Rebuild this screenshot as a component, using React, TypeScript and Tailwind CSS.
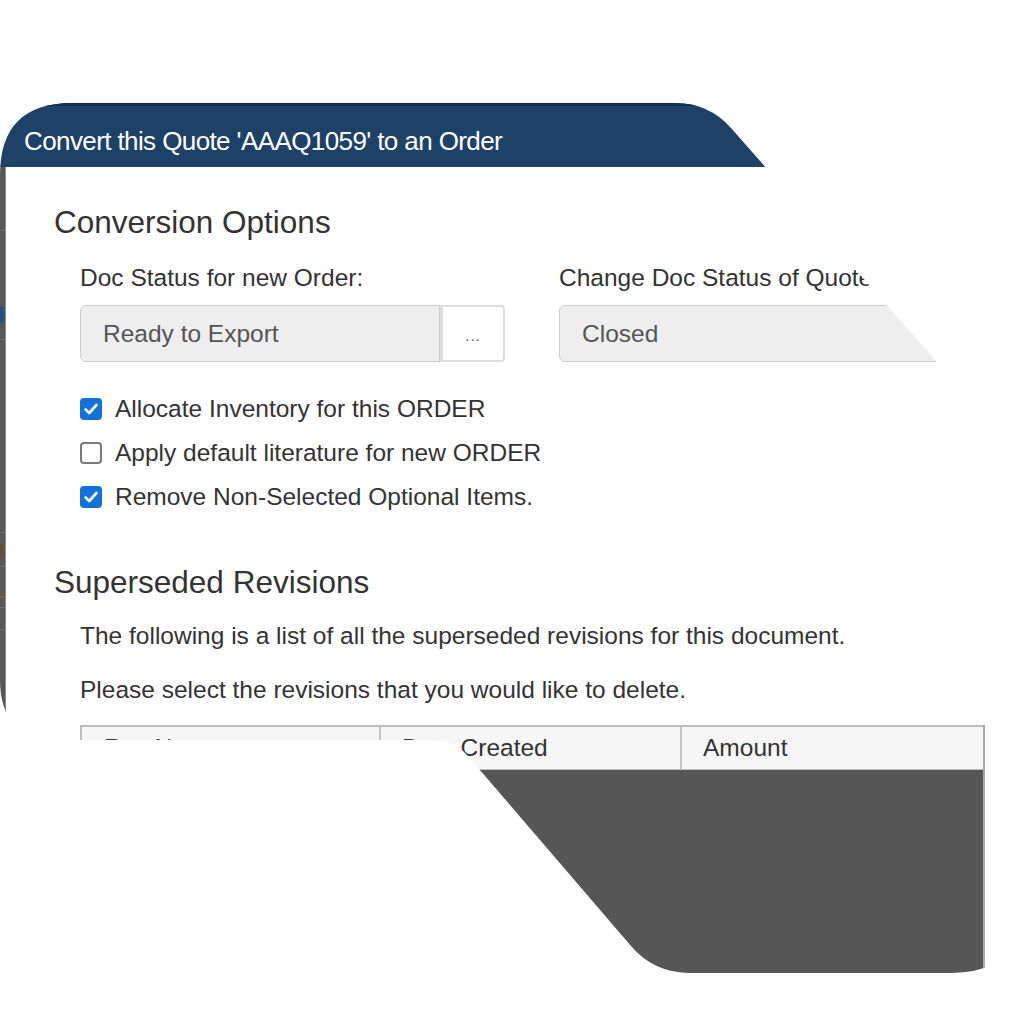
import React from "react";

function Check({ checked }: { checked: boolean }) {
  if (checked) {
    return (
      <div className="w-[22px] h-[22px] rounded-[4px] bg-[#1172dc] flex items-center justify-center shrink-0">
        <svg width="22" height="22" viewBox="0 0 22 22">
          <path d="M5.5 11.5 L9.2 15 L16.5 7" fill="none" stroke="white" strokeWidth="2.6" strokeLinecap="round" strokeLinejoin="round" />
        </svg>
      </div>
    );
  }
  return <div className="w-[22px] h-[22px] rounded-[4px] bg-white border-2 border-[#7a7a7a] shrink-0" />;
}

function CheckRow({ checked, label }: { checked: boolean; label: string }) {
  return (
    <div className="h-[44px] flex items-center gap-[13px]">
      <Check checked={checked} />
      <span className="text-[24.5px] leading-[28px] text-[#333]">{label}</span>
    </div>
  );
}

export default function App() {
  return (
    <div className="relative w-[1024px] h-[1024px] bg-white overflow-hidden font-['Liberation_Sans',Arial,sans-serif]">
      <div className="w-full h-full pt-[100px] [clip-path:path('M0,175_Q0,103_72,103_L675,103_Q709,103_731,128_L1024,461_L1024,900_Q1024,973_951,973_L690,973_Q654,973_631,946_L467,755_Q454,740_434,740_L60,740_Q0,740_0,680_Z')]">
        <div className="w-[985px] h-[924px] flex flex-col">
          <div className="h-[67px] shrink-0 border-t-[6px] border-[#10304f] bg-[#1d4167] pl-[24px] pt-[21px]">
            <div className="text-[26px] leading-[28px] tracking-[-0.6px] text-white whitespace-nowrap">
              Convert this Quote 'AAAQ1059' to an Order
            </div>
          </div>
          <div className="flex-1 flex">
            <div className="w-[6px] shrink-0 bg-[#575757] border-r border-[#8d8d8d] flex flex-col">
              <div className="h-[63px]" />
              <div className="h-px bg-[#6e6e6e]" />
              <div className="h-[76px]" />
              <div className="h-[16px] w-[4px] bg-[#24508a]" />
              <div className="h-[16px]" />
              <div className="h-px bg-[#6e6e6e]" />
              <div className="h-[192px]" />
              <div className="h-px bg-[#6e6e6e]" />
              <div className="h-[11px]" />
              <div className="h-[15px] w-[4px] bg-[#6a4a42]" />
              <div className="h-[7px]" />
              <div className="h-px bg-[#6e6e6e]" />
              <div className="h-[29px]" />
              <div className="h-[2px] w-[4px] bg-[#8a5a3a]" />
              <div className="h-[9px]" />
              <div className="h-px bg-[#6e6e6e]" />
              <div className="h-[21px]" />
              <div className="h-px bg-[#6e6e6e]" />
            </div>
            <div className="flex-1 bg-white pl-[48px] pt-[37px] flex flex-col text-[#333]">
              <div className="text-[31.5px] leading-[36px] text-[#333]">Conversion Options</div>
              <div className="mt-[24px] pl-[26px] flex gap-[54px]">
                <div className="w-[425px] flex flex-col">
                  <div className="text-[24.5px] leading-[28px] whitespace-nowrap">Doc Status for new Order:</div>
                  <div className="mt-[13px] h-[57px] flex">
                    <div className="w-[360px] h-full bg-[#eeeeee] border border-[#cccccc] rounded-l-[6px] flex items-center pl-[22px]">
                      <span className="text-[24.5px] leading-[28px] text-[#555]">Ready to Export</span>
                    </div>
                    <div className="w-[65px] h-full bg-white border-2 border-l-[3px] border-[#dddddd] rounded-r-[4px] flex items-center justify-center">
                      <span className="text-[15px] leading-[16px] text-[#555] tracking-[1px] pt-[4px]">...</span>
                    </div>
                  </div>
                </div>
                <div className="w-[426px] flex flex-col">
                  <div className="text-[24.5px] leading-[28px] whitespace-nowrap">Change Doc Status of Quote</div>
                  <div className="mt-[13px] h-[57px] bg-[#eeeeee] border border-[#cccccc] rounded-[6px] flex items-center pl-[22px]">
                    <span className="text-[24.5px] leading-[28px] text-[#555]">Closed</span>
                  </div>
                </div>
              </div>
              <div className="mt-[25px] pl-[26px] flex flex-col">
                <CheckRow checked={true} label="Allocate Inventory for this ORDER" />
                <CheckRow checked={false} label="Apply default literature for new ORDER" />
                <CheckRow checked={true} label="Remove Non-Selected Optional Items." />
              </div>
              <div className="mt-[45px] text-[31.5px] leading-[36px]">Superseded Revisions</div>
              <div className="mt-[22px] pl-[26px] text-[24.5px] leading-[28px] whitespace-nowrap">
                The following is a list of all the superseded revisions for this document.
              </div>
              <div className="mt-[26px] pl-[26px] text-[24.5px] leading-[28px] whitespace-nowrap">
                Please select the revisions that you would like to delete.
              </div>
              <div className="mt-[21px] ml-[26px] flex-1 flex flex-col border-r-2 border-[#a9a9a9]">
                <div className="h-[45px] flex bg-[#f6f6f6] border-t-2 border-l-2 border-b border-[#bdbdbd]">
                  <div className="w-[299px] border-r-2 border-[#c4c4c4] flex items-center pl-[22px]">
                    <span className="text-[24.5px] leading-[28px]">Rev No.</span>
                  </div>
                  <div className="w-[301px] border-r-2 border-[#c4c4c4] flex items-center pl-[21px]">
                    <span className="text-[24.5px] leading-[28px]">Date Created</span>
                  </div>
                  <div className="flex-1 flex items-center pl-[21px]">
                    <span className="text-[24.5px] leading-[28px]">Amount</span>
                  </div>
                </div>
                <div className="flex-1 bg-[#565656]" />
              </div>
            </div>
          </div>
        </div>
      </div>
    </div>
  );
}
